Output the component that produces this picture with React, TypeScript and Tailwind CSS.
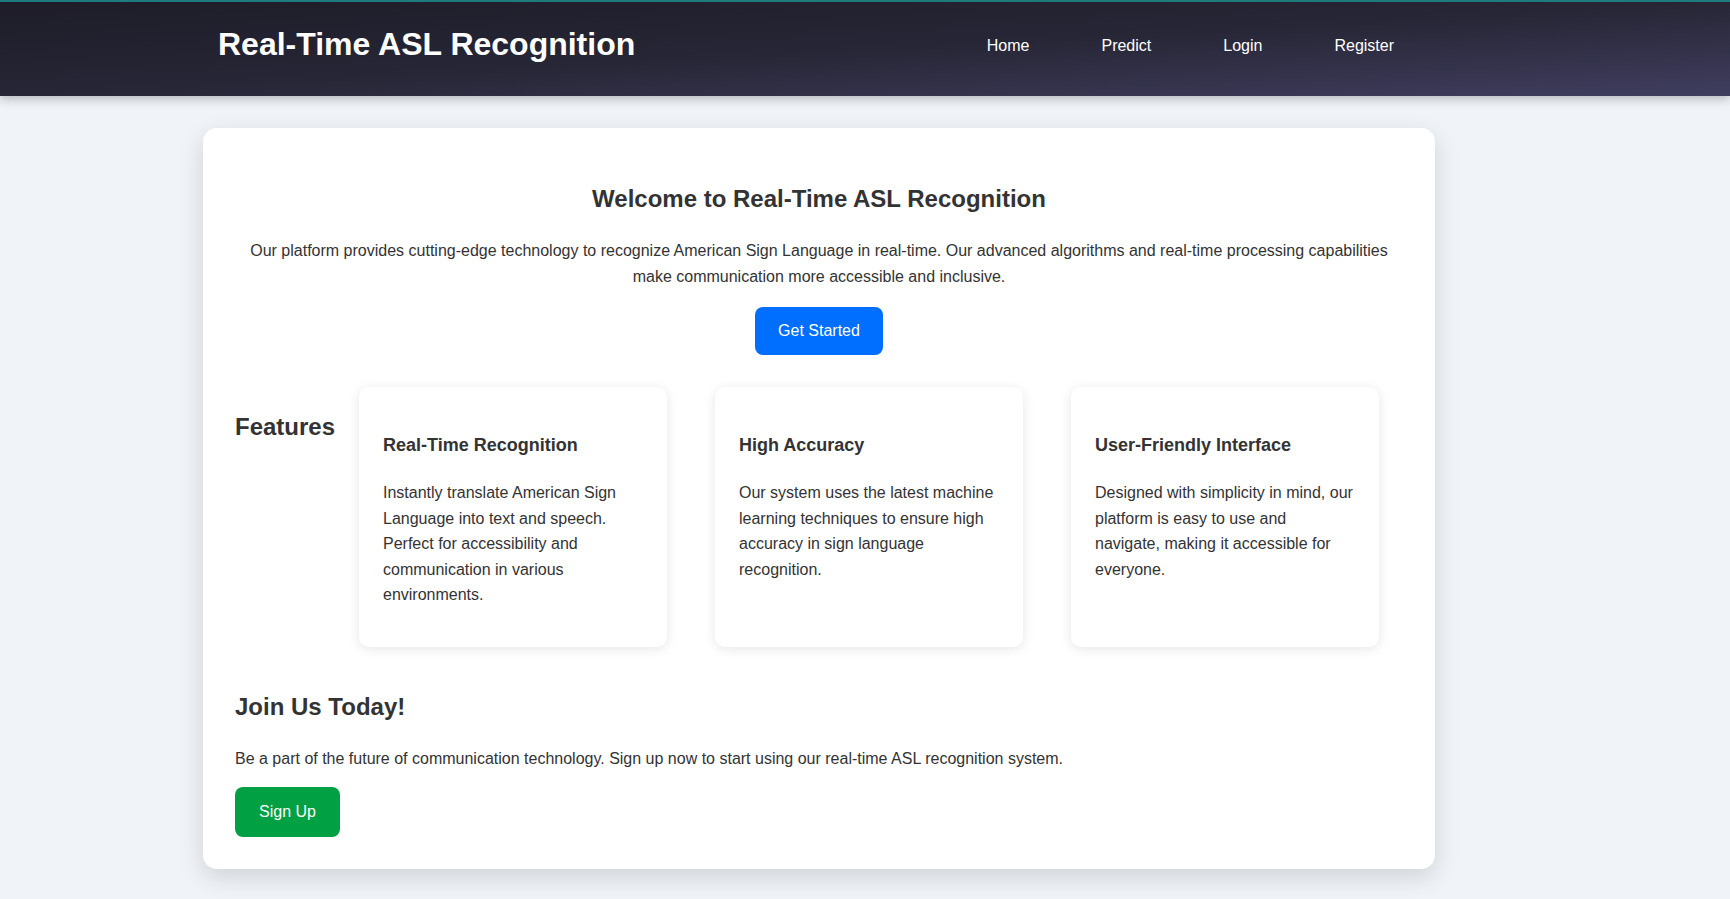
import React from "react";

type Feature = {
  title: string;
  text: string;
};

const features: Feature[] = [
  {
    title: "Real-Time Recognition",
    text: "Instantly translate American Sign Language into text and speech. Perfect for accessibility and communication in various environments.",
  },
  {
    title: "High Accuracy",
    text: "Our system uses the latest machine learning techniques to ensure high accuracy in sign language recognition.",
  },
  {
    title: "User-Friendly Interface",
    text: "Designed with simplicity in mind, our platform is easy to use and navigate, making it accessible for everyone.",
  },
];

const navItems = ["Home", "Predict", "Login", "Register"];

const App: React.FC = () => {
  return (
    <div className="min-h-screen bg-[#f0f4f8] font-['Liberation_Sans',Arial,sans-serif] text-[#333]">
      {/* Header */}
      <header className="relative z-10 h-[96px] border-t-2 border-[#1d7b7c] bg-gradient-to-br from-[#1d1c28] via-[#272636] to-[#403e5f] shadow-[0_3px_10px_rgba(0,0,0,0.25)]">
        <div className="flex h-full items-center justify-between pb-[6px] pl-[218px] pr-[336px]">
          <h1 className="mb-[4px] text-[32px] font-bold leading-[37px] text-white">
            Real-Time ASL Recognition
          </h1>
          <nav>
            <ul className="flex gap-[72px] text-[16px] text-white">
              {navItems.map((item) => (
                <li key={item}>
                  <a href="#" className="hover:underline">
                    {item}
                  </a>
                </li>
              ))}
            </ul>
          </nav>
        </div>
      </header>

      {/* Main card */}
      <main className="pt-[32px] pb-[30px]">
        <div className="ml-[203px] w-[1232px] rounded-[14px] bg-white px-[32px] pt-[57px] pb-[32px] shadow-[0_8px_24px_rgba(0,0,0,0.14)]">
          {/* Hero */}
          <section className="flex flex-col items-center text-center">
            <h2 className="text-[24px] font-bold leading-[27px]">
              Welcome to Real-Time ASL Recognition
            </h2>
            <p className="mt-[26px] text-[16px] leading-[26px] text-[#333]">
              Our platform provides cutting-edge technology to recognize American Sign Language in real-time. Our advanced algorithms and real-time processing capabilities
              <br />
              make communication more accessible and inclusive.
            </p>
            <button className="mt-[17px] h-[48px] rounded-[8px] bg-[#006eff] px-[23px] text-[16px] text-white">
              Get Started
            </button>
          </section>

          {/* Features */}
          <section className="mt-[32px] flex">
            <h2 className="w-[100px] pt-[26px] text-[24px] font-bold leading-[27px]">
              Features
            </h2>
            <div className="flex flex-1">
              {features.map((f) => (
                <div key={f.title} className="flex-1 px-[24px]">
                  <div className="h-[260px] rounded-[10px] bg-white px-[24px] pt-[48px] shadow-[0_2px_12px_rgba(0,0,0,0.1)]">
                    <h3 className="text-[18px] font-bold leading-[21px]">
                      {f.title}
                    </h3>
                    <p className="mt-[24px] text-[16px] leading-[25.6px] text-[#333]">
                      {f.text}
                    </p>
                  </div>
                </div>
              ))}
            </div>
          </section>

          {/* Join */}
          <section className="mt-[46px]">
            <h2 className="text-[24px] font-bold leading-[27px]">
              Join Us Today!
            </h2>
            <p className="mt-[26px] text-[16px] leading-[25.6px] text-[#333]">
              Be a part of the future of communication technology. Sign up now to start using our real-time ASL recognition system.
            </p>
            <button className="mt-[15px] h-[50px] rounded-[8px] bg-[#00a043] px-[24px] text-[16px] text-white">
              Sign Up
            </button>
          </section>
        </div>
      </main>
    </div>
  );
};

export default App;
